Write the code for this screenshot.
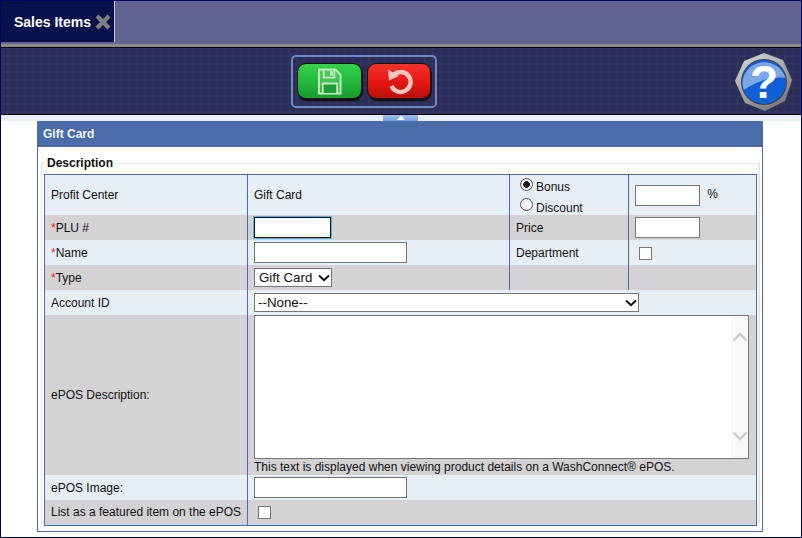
<div class="page">
  <div class="tabbar">
    <div class="tab">
      <span class="tab-title">Sales Items</span>
      <svg class="tab-close" viewBox="0 0 16 16" width="16" height="16">
        <path d="M0.5 3.5 3.5 0.5 8 5 12.5 0.5 15.5 3.5 11 8 15.5 12.5 12.5 15.5 8 11 3.5 15.5 0.5 12.5 5 8Z" fill="#80807f" />
      </svg>
    </div>
  </div>
  <div class="toolbar">
    <div class="actions">
      <button class="action save" aria-label="Save">
        <svg viewBox="0 0 26 28" width="25" height="27">
          <path d="M2 1.5H19L24.5 7V26.5H2Z" fill="#ffffff" fill-opacity="0.12" stroke="#c5ecc0" stroke-width="2" />
          <path d="M7 2V10H18V2" fill="none" stroke="#c5ecc0" stroke-width="2" />
          <path d="M13.5 3h3v5h-3z" fill="#c5ecc0" />
          <path d="M6 26V16H21V26" fill="#1d9c35" stroke="#c5ecc0" stroke-width="2" />
        </svg>
      </button>
      <button class="action undo" aria-label="Undo">
        <svg viewBox="0 0 28 28" width="28" height="28">
          <path d="M9 7.5A10 10 0 1 1 6.5 19" fill="none" stroke="#f6c6c2" stroke-width="4.4" />
          <path d="M3 2.5 4 13.5 14 9Z" fill="#f6c6c2" />
        </svg>
      </button>
    </div>
    <div class="help">
      <svg viewBox="0 0 60 60" width="60" height="60">
        <defs>
          <linearGradient id="rim" x1="0" y1="0" x2="0.6" y2="1">
            <stop offset="0" stop-color="#dcdcdc" />
            <stop offset="0.55" stop-color="#a8a8a8" />
            <stop offset="1" stop-color="#7c7c7c" />
          </linearGradient>
        </defs>
        <path d="M30 1 49 8 58 28 51 49 31 59 11 51 1 29 10 9Z" fill="url(#rim)" />
        <circle cx="30" cy="30" r="23" fill="#3a3f52" />
        <circle cx="30" cy="30" r="22" fill="#0f5fd8" />
        <path d="M8.5 30A22 22 0 0 1 51.5 26C40 24 22 29 10 38 9 36 8.5 33 8.5 30Z" fill="#7da6e8" />
        <text x="30" y="46" class="help-mark">?</text>
      </svg>
    </div>
  </div>
  <div class="strip">
    <div class="collapse"><span class="caret"></span></div>
  </div>

  <div class="card">
    <div class="card-head">Gift Card</div>
    <fieldset>
      <legend>Description</legend>
      <table>
        <colgroup>
          <col class="c1" /><col class="c2" /><col class="c3" /><col class="c4" />
        </colgroup>
        <tbody>
          <tr class="tall">
            <td>Profit Center</td>
            <td>Gift Card</td>
            <td class="radios">
              <label><input type="radio" name="kind" checked /><span>Bonus</span></label>
              <label><input type="radio" name="kind" /><span>Discount</span></label>
            </td>
            <td><input class="short" type="text" /> <span class="pct">%</span></td>
          </tr>
          <tr class="alt">
            <td><span class="req">*</span>PLU #</td>
            <td><input class="short focused" type="text" /></td>
            <td>Price</td>
            <td><input class="short" type="text" /></td>
          </tr>
          <tr>
            <td><span class="req">*</span>Name</td>
            <td><input class="mid" type="text" /></td>
            <td>Department</td>
            <td><input class="check" type="checkbox" /></td>
          </tr>
          <tr class="alt">
            <td><span class="req">*</span>Type</td>
            <td>
              <span class="select-wrap">
                <select class="type"><option>Gift Card</option></select>
                <svg class="chevron" viewBox="0 0 12 8" width="12" height="8"><path d="M1 1.5 6 6.2 11 1.5" fill="none" stroke="#111" stroke-width="2" /></svg>
              </span>
            </td>
            <td></td>
            <td></td>
          </tr>
          <tr>
            <td>Account ID</td>
            <td colspan="3">
              <span class="select-wrap">
                <select class="account"><option>--None--</option></select>
                <svg class="chevron" viewBox="0 0 12 8" width="12" height="8"><path d="M1 1.5 6 6.2 11 1.5" fill="none" stroke="#111" stroke-width="2" /></svg>
              </span>
            </td>
          </tr>
          <tr class="alt">
            <td>ePOS Description:</td>
            <td colspan="3" class="desc">
              <div class="fake-area">
                <div class="scroll">
                  <svg viewBox="0 0 16 12" width="16" height="12"><path d="M1.5 9.5 8 3 14.5 9.5" fill="none" stroke="#cdcdcd" stroke-width="2.4" /></svg>
                  <svg viewBox="0 0 16 12" width="16" height="12"><path d="M1.5 2.5 8 9 14.5 2.5" fill="none" stroke="#cdcdcd" stroke-width="2.4" /></svg>
                </div>
              </div>
              <div class="note">This text is displayed when viewing product details on a WashConnect® ePOS.</div>
            </td>
          </tr>
          <tr>
            <td>ePOS Image:</td>
            <td colspan="3"><input class="mid" type="text" /></td>
          </tr>
          <tr class="alt">
            <td>List as a featured item on the ePOS</td>
            <td colspan="3"><input class="check" type="checkbox" /></td>
          </tr>
        </tbody>
      </table>
    </fieldset>
  </div>
</div>

<style>
  :global(body) {
    margin: 0;
    background: #fff;
  }

  .page {
    box-sizing: border-box;
    width: 802px;
    height: 538px;
    border: 1px solid #000066;
    overflow: hidden;
    font-family: 'Liberation Sans', Arial, sans-serif;
    font-size: 12px;
    color: #111;
    background: #fff;
  }

  .tabbar {
    box-sizing: border-box;
    height: 46px;
    background: #63638f;
    border-bottom: 3px solid #8a8a8a;
    padding-bottom: 2px;
    display: flex;
  }

  .tab {
    width: 114px;
    box-sizing: border-box;
    background: #07124c;
    border-right: 1px solid #c8c8d8;
    display: flex;
    align-items: center;
    padding-left: 13px;
    gap: 4px;
  }

  .tab-title {
    color: #fff;
    font-weight: bold;
    font-size: 14px;
  }

  .toolbar {
    box-sizing: border-box;
    height: 68px;
    border-top: 1px solid #000;
    border-bottom: 1px solid #000;
    background-color: #2e3360;
    background-image: radial-gradient(circle at 4px 4px, #2a2e57 3px, transparent 3.5px);
    background-size: 8px 8px;
    position: relative;
    display: flex;
    align-items: center;
    padding-left: 290px;
  }

  .actions {
    box-sizing: border-box;
    width: 146px;
    height: 53px;
    border: 2px solid #6f86c0;
    border-radius: 5px;
    display: flex;
    gap: 5px;
    align-items: center;
    padding: 0 4px;
  }

  .action {
    width: 65px;
    height: 36px;
    padding: 0;
    border: 1px solid #111;
    border-radius: 9px;
    display: flex;
    align-items: center;
    justify-content: center;
    box-shadow: 1px 2px 1px #111;
  }

  .save {
    background: linear-gradient(#34d24a, #21b53a 60%, #1a9a30);
  }

  .undo {
    background: linear-gradient(#f4332a, #e2150f 60%, #b80f0b);
  }

  .help {
    position: absolute;
    right: 7px;
    top: 4px;
    height: 60px;
  }

  .help-mark {
    font-family: 'Liberation Sans', Arial, sans-serif;
    font-weight: bold;
    font-size: 46px;
    fill: #fff;
    text-anchor: middle;
  }

  .strip {
    height: 6px;
    background: #e6eef6;
    display: flex;
    padding-left: 382px;
  }

  .collapse {
    width: 35px;
    height: 6px;
    background: linear-gradient(#a9c3ee, #6f9be8);
    display: flex;
    justify-content: center;
    align-items: center;
  }

  .caret {
    border-left: 4px solid transparent;
    border-right: 4px solid transparent;
    border-bottom: 4px solid #fff;
  }

  .card {
    box-sizing: border-box;
    width: 726px;
    height: 411px;
    margin-left: 36px;
    border: 1px solid #4a6ca8;
    border-top: 0;
  }

  .card-head {
    height: 26px;
    line-height: 26px;
    margin: 0 -1px;
    padding-left: 6px;
    background: #4a6ca8;
    color: #f2f5fa;
    font-weight: bold;
  }

  fieldset {
    margin: 9px 2px 0 3px;
    padding: 4px 3px 0 2px;
    border: 2px solid #e8e8e8;
    border-width: 1px 2px 2px 1px;
    min-width: 0;
    height: 367px;
    box-sizing: border-box;
  }

  legend {
    padding: 0 2px;
    margin-left: 1px;
    font-weight: bold;
  }

  table {
    table-layout: fixed;
    border-collapse: collapse;
    width: 713px;
    border: 1px solid #4a6ca8;
  }

  .c1 { width: 203px; }
  .c2 { width: 262px; }
  .c3 { width: 119px; }
  .c4 { width: 128px; }

  td {
    height: 25px;
    padding: 0 6px;
    background: #e6eef6;
    border-left: 1px solid #4a6ca8;
    box-sizing: border-box;
    white-space: nowrap;
  }

  .alt td {
    background: #d4d2d5;
  }

  .tall td {
    height: 40px;
  }

  .req {
    color: #e8202a;
  }

  input[type='text'],
  select {
    box-sizing: border-box;
    margin: 0;
    padding: 0 2px;
    background: #fff;
    border: 1px solid #767676;
    border-radius: 0;
    font: 13.33px 'Liberation Sans', Arial, sans-serif;
    color: #111;
    vertical-align: middle;
  }

  select {
    appearance: none;
    display: block;
  }

  .select-wrap {
    display: inline-block;
    position: relative;
    vertical-align: middle;
  }

  .chevron {
    position: absolute;
    right: 2px;
    top: 6px;
  }

  .short {
    width: 65px;
    height: 21px;
  }

  .focused {
    width: 77px;
    border-color: #111 !important;
    outline: 1px solid #4fb3e6;
  }

  .mid {
    width: 153px;
    height: 21px;
  }

  .type {
    width: 78px;
    height: 19px;
    padding-left: 4px;
  }

  .account {
    width: 385px;
    height: 19px;
    padding-left: 3px;
  }

  .check {
    appearance: none;
    box-sizing: border-box;
    width: 13px;
    height: 13px;
    margin: 0 0 0 4px;
    background: #fff;
    border: 1px solid #767676;
    vertical-align: middle;
  }

  .pct {
    margin-left: 4px;
  }

  .radios label {
    display: flex;
    align-items: flex-start;
    gap: 3px;
    height: 20px;
    margin-left: 4px;
  }

  .radios span {
    padding-top: 5px;
  }

  .radios label + label span {
    padding-top: 6px;
  }

  .radios input {
    appearance: none;
    box-sizing: border-box;
    margin: 3px 0 0;
    width: 13px;
    height: 13px;
    border: 1px solid #555;
    border-radius: 50%;
    background: #f4f4f4;
  }

  .radios input:checked {
    background: radial-gradient(circle, #111 3px, #f0f0f0 3.6px);
  }

  .desc {
    height: 160px;
    vertical-align: top;
  }

  .fake-area {
    box-sizing: border-box;
    width: 495px;
    height: 144px;
    background: #fff;
    border: 1px solid #767676;
    display: flex;
    justify-content: flex-end;
  }

  .scroll {
    width: 17px;
    background: #f8f8f8;
    display: flex;
    flex-direction: column;
    justify-content: space-between;
    align-items: center;
    padding: 15px 0 16px;
    box-sizing: border-box;
  }

  .note {
    margin-top: 1px;
    height: 15px;
    line-height: 15px;
  }
</style>
